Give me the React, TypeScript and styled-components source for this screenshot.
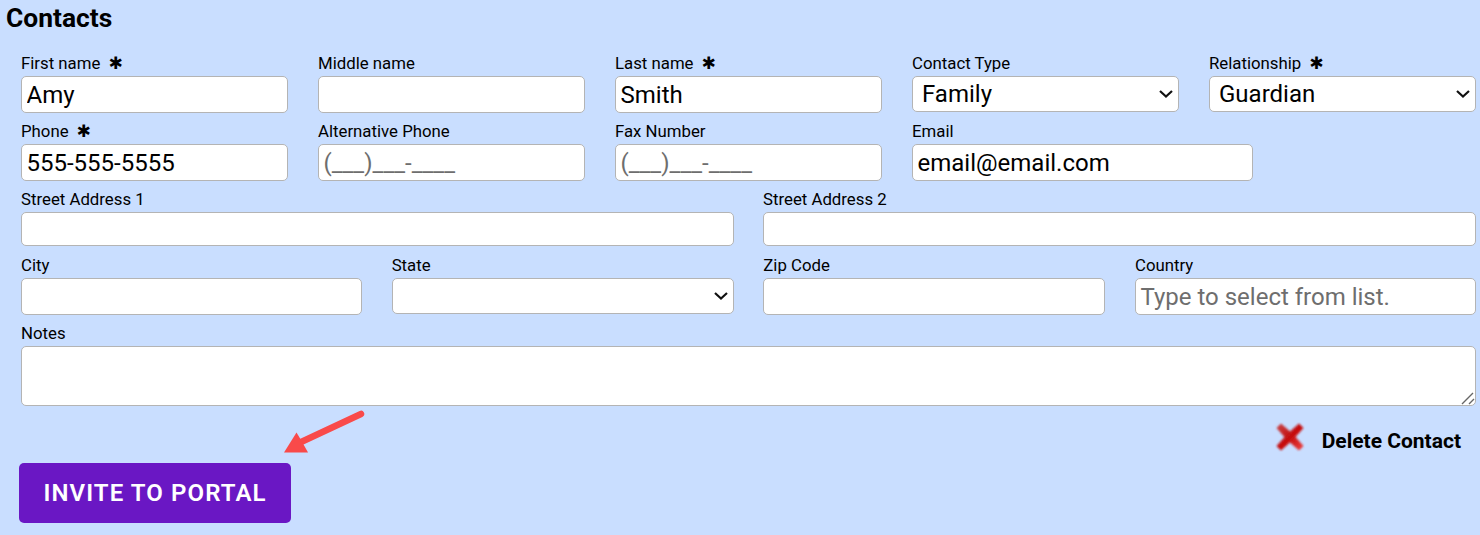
import styled, { createGlobalStyle } from 'styled-components';

const chevron =
  "url(\"data:image/svg+xml,%3Csvg xmlns='http://www.w3.org/2000/svg' width='14' height='8' viewBox='0 0 14 8'%3E%3Cpath d='M1 1l6 5.5L13 1' fill='none' stroke='%23111' stroke-width='2.2'/%3E%3C/svg%3E\")";

const grip =
  "url(\"data:image/svg+xml,%3Csvg xmlns='http://www.w3.org/2000/svg' width='15' height='15' viewBox='0 0 15 15'%3E%3Cpath d='M2 14L13 3M9 14l5-5' fill='none' stroke='%23666' stroke-width='1.4'/%3E%3C/svg%3E\")";

const GlobalStyle = createGlobalStyle`
  html, body {
    margin: 0;
    padding: 0;
    background: #c9deff;
    font-family: Roboto, "Liberation Sans", sans-serif;
    color: #000;
  }
`;

const Page = styled.div`
  position: relative;
  box-sizing: border-box;
  width: 1480px;
  height: 535px;
  padding: 4px 4px 0 6px;
  overflow: hidden;
`;

const Title = styled.h2`
  margin: 0;
  height: 50px;
  font-size: 26.4px;
  line-height: 29px;
  font-weight: 700;
`;

const Form = styled.div`
  padding-left: 15px;
  display: flex;
  flex-direction: column;
  gap: 9px;
`;

const Row = styled.div<{ $columns: string; $gap?: number; $extra?: number }>`
  display: grid;
  grid-template-columns: ${p => p.$columns};
  column-gap: ${p => p.$gap ?? 30}px;
  margin-bottom: ${p => p.$extra ?? 0}px;
`;

const Field = styled.div`
  display: flex;
  flex-direction: column;
  min-width: 0;
`;

const Label = styled.label`
  display: block;
  height: 22px;
  font-size: 16.8px;
  line-height: 18px;
  white-space: nowrap;
`;

const Star = styled.span`
  margin-left: 8px;
  font-family: "DejaVu Sans", sans-serif;
  font-size: 17px;
`;

const TextInput = styled.input<{ $height?: number }>`
  box-sizing: border-box;
  width: 100%;
  height: ${p => p.$height ?? 37}px;
  padding: 1px 5px 1px 4.5px;
  background: #fff;
  border: 1px solid #b4b4b4;
  border-radius: 5px;
  font-family: Roboto, sans-serif;
  font-size: 24px;
  color: #000;
  outline: none;

  &::placeholder {
    color: #6e6e6e;
    opacity: 1;
  }
`;

const Select = styled.select`
  box-sizing: border-box;
  width: 100%;
  height: 36px;
  padding: 1px 24px 1px 9px;
  appearance: none;
  background: #fff ${chevron} no-repeat right 5px center;
  border: 1px solid #b4b4b4;
  border-radius: 5px;
  font-family: Roboto, sans-serif;
  font-size: 24px;
  color: #000;
  outline: none;
`;

const Notes = styled.textarea`
  display: block;
  box-sizing: border-box;
  width: 100%;
  height: 60px;
  background: #fff;
  border: 1px solid #b4b4b4;
  border-radius: 5px;
  outline: none;

  &::-webkit-resizer {
    background: ${grip} no-repeat center;
  }
`;

const DeleteRow = styled.div`
  display: flex;
  justify-content: flex-end;
  align-items: center;
  gap: 17px;
  height: 34px;
  margin-top: 18px;
  padding-right: 15px;
`;

const DeleteText = styled.span`
  font-size: 21px;
  font-weight: 700;
`;

const DeleteIcon = styled.svg`
  margin-bottom: 8px;
`;

const InviteButton = styled.button`
  display: block;
  width: 272px;
  height: 60px;
  margin: 5px 0 0 13px;
  padding: 0;
  border: none;
  border-radius: 5px;
  background: #6a17c4;
  color: #fff;
  font-family: Roboto, sans-serif;
  font-size: 24px;
  font-weight: 600;
  letter-spacing: 1.1px;
`;

const ArrowMark = styled.svg`
  position: absolute;
  left: 280px;
  top: 405px;
`;

const Req = () => <Star>✱</Star>;

const App = () => (
  <Page>
    <GlobalStyle />
    <Title>Contacts</Title>
    <Form>
      <Row $columns="repeat(5, 267px)">
        <Field>
          <Label>First name<Req /></Label>
          <TextInput defaultValue="Amy" />
        </Field>
        <Field>
          <Label>Middle name</Label>
          <TextInput />
        </Field>
        <Field>
          <Label>Last name<Req /></Label>
          <TextInput defaultValue="Smith" />
        </Field>
        <Field>
          <Label>Contact Type</Label>
          <Select defaultValue="Family"><option>Family</option></Select>
        </Field>
        <Field>
          <Label>Relationship<Req /></Label>
          <Select defaultValue="Guardian"><option>Guardian</option></Select>
        </Field>
      </Row>
      <Row $columns="repeat(3, 267px) 341px">
        <Field>
          <Label>Phone<Req /></Label>
          <TextInput defaultValue="555-555-5555" />
        </Field>
        <Field>
          <Label>Alternative Phone</Label>
          <TextInput placeholder="(___)___-____" />
        </Field>
        <Field>
          <Label>Fax Number</Label>
          <TextInput placeholder="(___)___-____" />
        </Field>
        <Field>
          <Label>Email</Label>
          <TextInput defaultValue="email@email.com" />
        </Field>
      </Row>
      <Row $columns="713px 713px" $gap={29} $extra={1}>
        <Field>
          <Label>Street Address 1</Label>
          <TextInput $height={34} />
        </Field>
        <Field>
          <Label>Street Address 2</Label>
          <TextInput $height={34} />
        </Field>
      </Row>
      <Row $columns="341px 342px 342px 341px" $gap={29.67}>
        <Field>
          <Label>City</Label>
          <TextInput />
        </Field>
        <Field>
          <Label>State</Label>
          <Select><option></option></Select>
        </Field>
        <Field>
          <Label>Zip Code</Label>
          <TextInput />
        </Field>
        <Field>
          <Label>Country</Label>
          <TextInput placeholder="Type to select from list." />
        </Field>
      </Row>
      <Field>
        <Label>Notes</Label>
        <Notes />
      </Field>
    </Form>
    <DeleteRow>
      <DeleteIcon width="30" height="30" viewBox="0 0 30 30">
        <defs>
          <linearGradient id="xRed" x1="0" y1="0" x2="1" y2="1">
            <stop offset="0" stopColor="#c9474b" />
            <stop offset="0.5" stopColor="#c40d0d" />
            <stop offset="1" stopColor="#f04545" />
          </linearGradient>
          <filter id="xSoft"><feGaussianBlur stdDeviation="0.8" /></filter>
        </defs>
        <path
          d="M6 1.5 L15 9.5 L24 1.5 L28.5 6 L20.5 15 L28.5 24 L24 28.5 L15 20.5 L6 28.5 L1.5 24 L9.5 15 L1.5 6 Z"
          fill="url(#xRed)"
          filter="url(#xSoft)"
        />
      </DeleteIcon>
      <DeleteText>Delete Contact</DeleteText>
    </DeleteRow>
    <InviteButton>INVITE TO PORTAL</InviteButton>
    <ArrowMark width="90" height="52" viewBox="0 0 90 52">
      <path d="M81 9 L19 38" stroke="#f94a4a" strokeWidth="6.5" strokeLinecap="round" fill="none" />
      <path d="M4 47.5 L16.5 27.5 L21 35 L28 47.5 Z" fill="#f94a4a" />
    </ArrowMark>
  </Page>
);

export default App;
